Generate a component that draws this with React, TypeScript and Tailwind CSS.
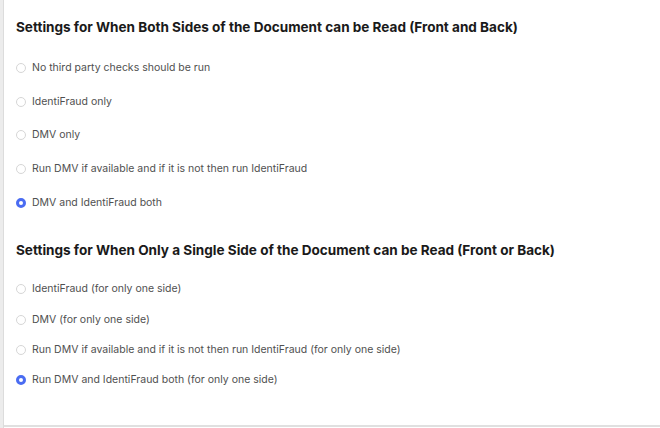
import React from "react";

const both = [
  { label: "No third party checks should be run", checked: false },
  { label: "IdentiFraud only", checked: false },
  { label: "DMV only", checked: false },
  { label: "Run DMV if available and if it is not then run IdentiFraud", checked: false },
  { label: "DMV and IdentiFraud both", checked: true },
];

const single = [
  { label: "IdentiFraud (for only one side)", checked: false },
  { label: "DMV (for only one side)", checked: false },
  { label: "Run DMV if available and if it is not then run IdentiFraud (for only one side)", checked: false },
  { label: "Run DMV and IdentiFraud both (for only one side)", checked: true },
];

function Radio({ checked }: { checked: boolean }) {
  return checked ? (
    <span className="box-border w-[10px] h-[10px] rounded-full border-[3px] border-[#4a6cf2] bg-white shrink-0" />
  ) : (
    <span className="box-border w-[10px] h-[10px] rounded-full border border-[#d6d6d6] bg-white shrink-0" />
  );
}

function Option({ label, checked, h }: { label: string; checked: boolean; h: string }) {
  return (
    <div className={`flex items-center gap-[6px] ${h}`}>
      <Radio checked={checked} />
      <span className="text-[10.5px] leading-[16px] text-[#505050]">{label}</span>
    </div>
  );
}

export default function App() {
  return (
    <div
      className="w-[660px] h-[428px] flex bg-white overflow-hidden"
      style={{ fontFamily: "Inter, 'Noto Sans', sans-serif" }}
    >
      <div className="w-[3px] bg-[#ececec] shrink-0" />
      <div className="w-[1px] bg-[#dcdcdc] shrink-0" />
      <div className="flex-1 flex flex-col">
        <div className="flex-1 flex flex-col pl-[12px] pt-[17px]">
          <h2 className="text-[13.55px] leading-[20px] font-bold text-[#1a1a1a]">
            Settings for When Both Sides of the Document can be Read (Front and Back)
          </h2>
          <div className="mt-[14px] flex flex-col">
            {both.map((o) => (
              <Option key={o.label} label={o.label} checked={o.checked} h="h-[33.75px]" />
            ))}
          </div>
          <h2 className="mt-[20px] text-[13.55px] leading-[20px] font-bold text-[#1a1a1a]">
            Settings for When Only a Single Side of the Document can be Read (Front or Back)
          </h2>
          <div className="mt-[14.5px] flex flex-col">
            {single.map((o) => (
              <Option key={o.label} label={o.label} checked={o.checked} h="h-[30.33px]" />
            ))}
          </div>
        </div>
        <div className="h-[2px] bg-[#e0e0e0] shrink-0" />
        <div className="h-[1px] shrink-0" />
      </div>
    </div>
  );
}
